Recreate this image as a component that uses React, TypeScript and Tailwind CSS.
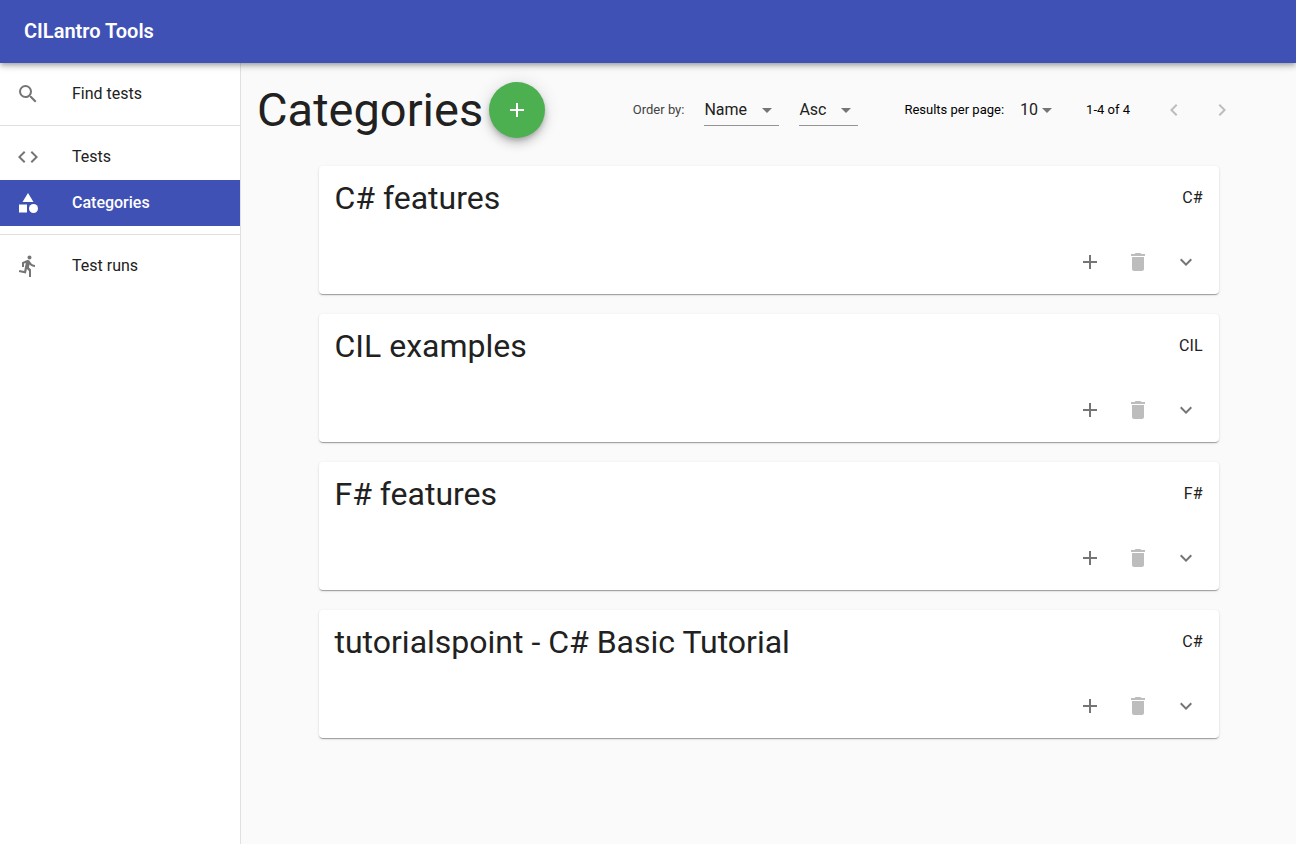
import { useState } from 'react';
import type { ComponentType } from 'react';
import {
  MdAdd,
  MdArrowDropDown,
  MdCategory,
  MdCode,
  MdDelete,
  MdDirectionsRun,
  MdExpandMore,
  MdKeyboardArrowLeft,
  MdKeyboardArrowRight,
  MdSearch,
} from 'react-icons/md';

type NavItem = { label: string; icon: ComponentType<{ className?: string }> };

const navGroups: NavItem[][] = [
  [{ label: 'Find tests', icon: MdSearch }],
  [
    { label: 'Tests', icon: MdCode },
    { label: 'Categories', icon: MdCategory },
  ],
  [{ label: 'Test runs', icon: MdDirectionsRun }],
];

const categories = [
  { name: 'C# features', language: 'C#' },
  { name: 'CIL examples', language: 'CIL' },
  { name: 'F# features', language: 'F#' },
  { name: 'tutorialspoint - C# Basic Tutorial', language: 'C#' },
];

function Sidebar({ active }: { active: string }) {
  return (
    <nav className="w-[241px] shrink-0 border-r border-[#e0e0e0] bg-white">
      {navGroups.map((group, index) => (
        <ul
          key={index}
          className={`py-2 ${index < navGroups.length - 1 ? 'border-b border-[#e0e0e0]' : ''}`}
        >
          {group.map(({ label, icon: Icon }) => {
            const selected = label === active;
            return (
              <li key={label}>
                <a
                  href="#"
                  aria-current={selected ? 'page' : undefined}
                  className={`flex items-center gap-8 px-4 py-[11px] text-base ${
                    selected ? 'bg-[#3f51b5] font-medium text-white' : ''
                  }`}
                >
                  <Icon className={`size-6 ${selected ? '' : 'text-[#757575]'}`} />
                  {label}
                </a>
              </li>
            );
          })}
        </ul>
      ))}
    </nav>
  );
}

function CategoryCard({ name, language }: { name: string; language: string }) {
  return (
    <article className="rounded bg-white shadow-[0_2px_1px_-1px_rgba(0,0,0,0.2),0_1px_1px_0_rgba(0,0,0,0.14),0_1px_3px_0_rgba(0,0,0,0.12)]">
      <div className="flex items-center justify-between px-4 pt-4 pb-6">
        <h2 className="text-[32px] leading-8">{name}</h2>
        <span className="text-base">{language}</span>
      </div>
      <div className="flex justify-end pr-[9px] pb-2 text-[#757575]">
        <button type="button" aria-label={`Add to ${name}`} className="rounded-full p-3">
          <MdAdd className="size-6" />
        </button>
        <button type="button" disabled aria-label={`Delete ${name}`} className="rounded-full p-3 text-[#bdbdbd]">
          <MdDelete className="size-6" />
        </button>
        <button type="button" aria-label={`Expand ${name}`} className="rounded-full p-3">
          <MdExpandMore className="size-6" />
        </button>
      </div>
    </article>
  );
}

function ListControls() {
  const [order, setOrder] = useState('Name');
  const [direction, setDirection] = useState('Asc');
  const [pageSize, setPageSize] = useState('10');
  return (
    <div className="flex items-center pr-[34px]">
      <label htmlFor="order" className="mr-5 text-[13px] text-[#424242]">
        Order by:
      </label>
      <div className="relative mr-5">
        <select
          id="order"
          value={order}
          onChange={(e) => setOrder(e.target.value)}
          className="h-8 w-[75px] appearance-none border-b border-[#949494] bg-transparent text-base"
        >
          <option>Name</option>
        </select>
        <MdArrowDropDown className="pointer-events-none absolute top-1 right-0 size-6 text-[#757575]" />
      </div>
      <div className="relative mr-[46px]">
        <select
          aria-label="Direction"
          value={direction}
          onChange={(e) => setDirection(e.target.value)}
          className="h-8 w-[59px] appearance-none border-b border-[#949494] bg-transparent text-base"
        >
          <option>Asc</option>
          <option>Desc</option>
        </select>
        <MdArrowDropDown className="pointer-events-none absolute top-1 right-0 size-6 text-[#757575]" />
      </div>
      <label htmlFor="page-size" className="mr-4 text-[13px] text-black">
        Results per page:
      </label>
      <div className="relative mr-[27px]">
        <select
          id="page-size"
          value={pageSize}
          onChange={(e) => setPageSize(e.target.value)}
          className="h-8 w-[39px] appearance-none bg-transparent text-base"
        >
          <option>10</option>
          <option>25</option>
        </select>
        <MdArrowDropDown className="pointer-events-none absolute top-1 right-0 size-6 text-[#757575]" />
      </div>
      <span className="mr-5 text-[13px] text-black">1-4 of 4</span>
      <button type="button" disabled aria-label="Previous page" className="rounded-full p-3 text-[#bdbdbd]">
        <MdKeyboardArrowLeft className="size-6" />
      </button>
      <button type="button" disabled aria-label="Next page" className="rounded-full p-3 text-[#bdbdbd]">
        <MdKeyboardArrowRight className="size-6" />
      </button>
    </div>
  );
}

export default function App() {
  return (
    <div className="flex min-h-screen flex-col bg-[#fafafa] font-[Roboto,sans-serif] text-[#212121]">
      <header className="z-10 flex h-[63px] items-center bg-[#3f51b5] px-6 pb-0.5 text-white shadow-[0_2px_4px_-1px_rgba(0,0,0,0.2),0_4px_5px_0_rgba(0,0,0,0.14),0_1px_10px_0_rgba(0,0,0,0.12)]">
        <span className="text-xl font-semibold">CILantro Tools</span>
      </header>
      <div className="flex flex-1">
        <Sidebar active="Categories" />
        <main className="min-w-0 flex-1 px-4 pt-[19px] pb-4">
          <div className="flex items-center justify-between">
            <div className="flex items-center gap-1.5">
              <h1 className="text-[47px] leading-14">Categories</h1>
              <button
                type="button"
                aria-label="Add category"
                className="flex size-14 items-center justify-center rounded-full bg-[#4caf50] text-white shadow-[0_3px_5px_-1px_rgba(0,0,0,0.2),0_6px_10px_0_rgba(0,0,0,0.14),0_1px_18px_0_rgba(0,0,0,0.12)]"
              >
                <MdAdd className="size-6" />
              </button>
            </div>
            <ListControls />
          </div>
          <div className="mx-auto mt-7 flex max-w-[900px] flex-col gap-5">
            {categories.map((category) => (
              <CategoryCard key={category.name} {...category} />
            ))}
          </div>
        </main>
      </div>
    </div>
  );
}
